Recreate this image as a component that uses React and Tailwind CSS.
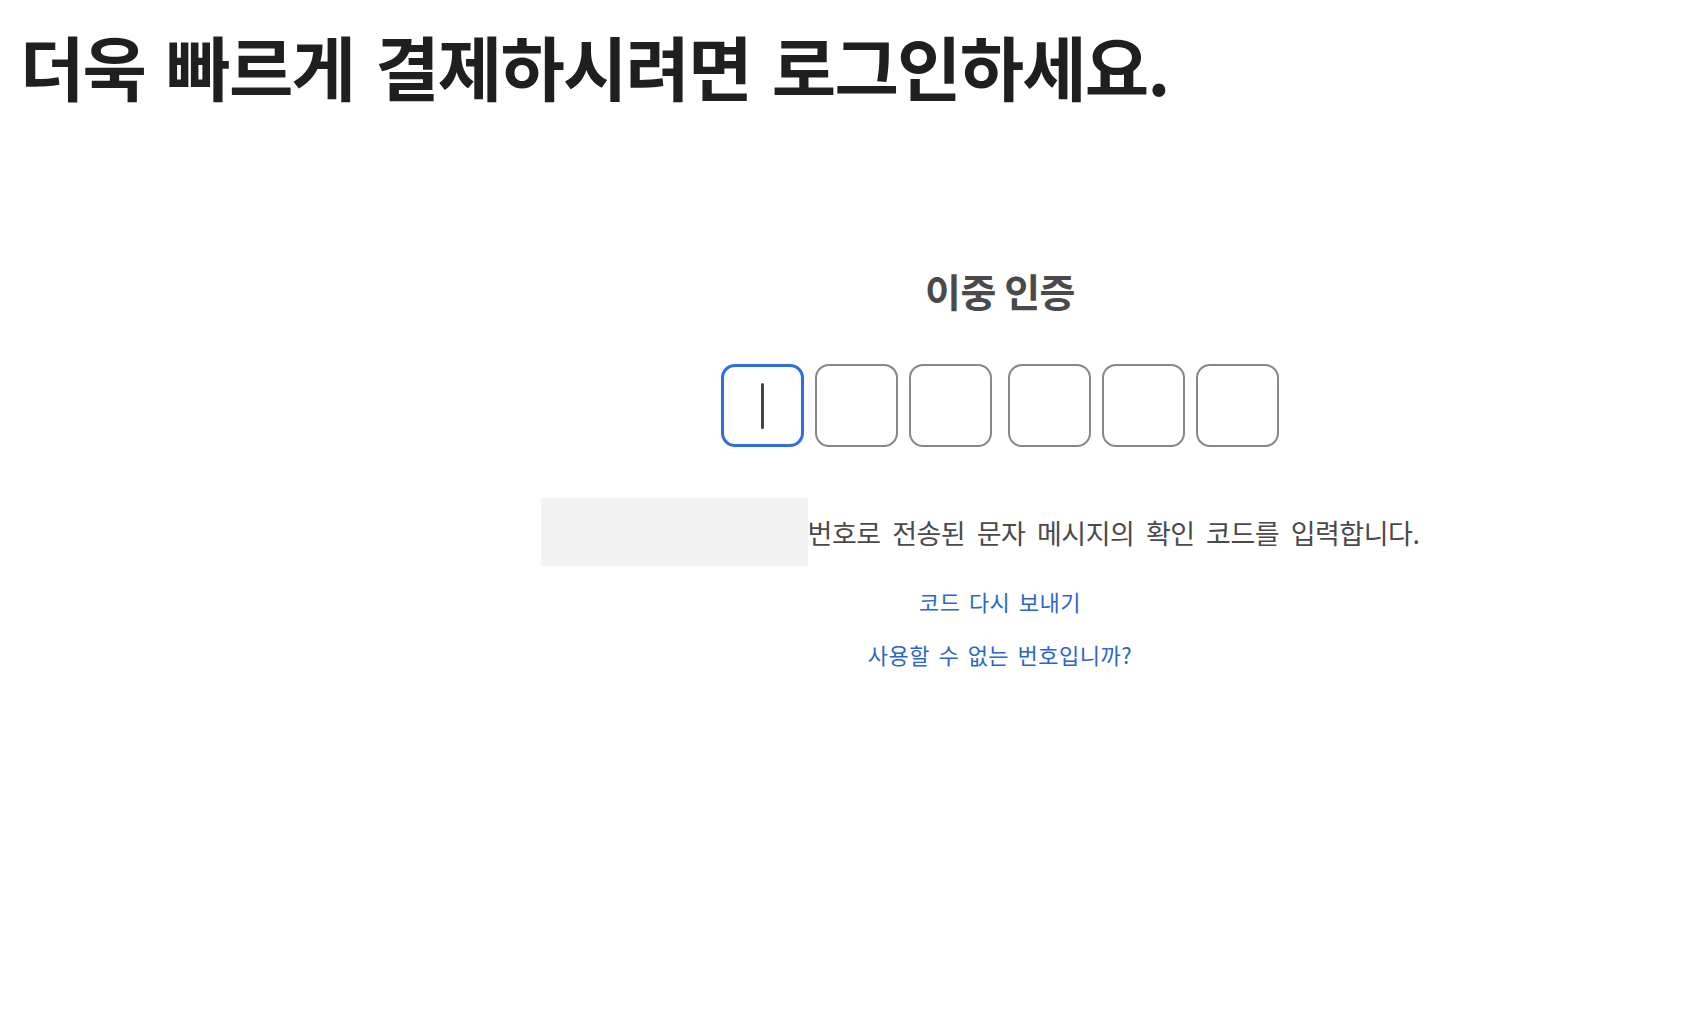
import React from "react";

const font = { fontFamily: '"Noto Sans CJK KR", "Noto Sans", sans-serif' };

function CodeBox({ active }) {
  if (active) {
    return (
      <div className="w-[83px] h-[83px] rounded-[14px] border-[3px] border-[#2f6ee0] flex items-center justify-center bg-white">
        <div className="w-[3px] h-[46px] rounded-full bg-[#444444]" />
      </div>
    );
  }
  return <div className="w-[83px] h-[83px] rounded-[14px] border-2 border-[#87878b] bg-white" />;
}

export default function App() {
  return (
    <div className="min-h-screen bg-white text-[#1f1f1f]" style={font}>
      <h1 className="pl-[20px] pt-[31px] text-[70px] leading-none font-bold tracking-[-1.8px] [word-spacing:7px] text-[#1f1f1f]">
        더욱 빠르게 결제하시려면 로그인하세요.
      </h1>
      <div className="flex">
        <div className="w-[318px] shrink-0" />
        <div className="flex-1 flex flex-col items-center">
          <h2 className="mt-[170px] text-[39px] leading-none font-bold text-[#4a4a4a] tracking-[-0.5px]">
            이중 인증
          </h2>
          <div className="mt-[54px] flex items-center">
            <div className="flex gap-[11px]">
              <CodeBox active />
              <CodeBox />
              <CodeBox />
            </div>
            <div className="flex gap-[11px] ml-[16px]">
              <CodeBox />
              <CodeBox />
              <CodeBox />
            </div>
          </div>
          <div className="mt-[51px] flex items-center mr-[40px]">
            <div className="w-[267px] h-[68px] bg-[#f2f2f2]" />
            <p className="text-[27px] leading-none text-[#4a4a4a] tracking-[-0.5px] [word-spacing:6px]">
              번호로 전송된 문자 메시지의 확인 코드를 입력합니다.
            </p>
          </div>
          <a href="#" className="mt-[23px] text-[22px] leading-[24px] text-[#2c66cc] tracking-[0.5px] [word-spacing:3px]">
            코드 다시 보내기
          </a>
          <a href="#" className="mt-[29px] text-[22px] leading-[24px] text-[#2c66cc] tracking-[0.5px] [word-spacing:3px]">
            사용할 수 없는 번호입니까?
          </a>
        </div>
      </div>
    </div>
  );
}
